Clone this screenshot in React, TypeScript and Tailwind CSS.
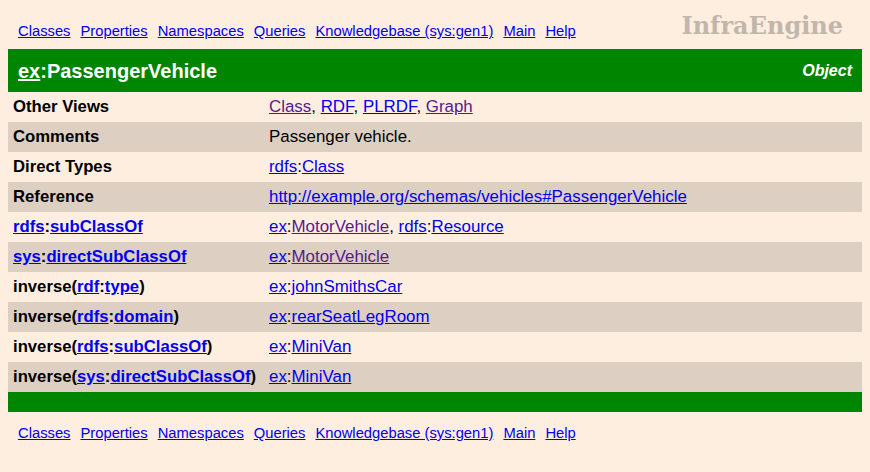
import React from 'react';

const blue = 'text-[#0000ee] underline';
const purple = 'text-[#551a8b] underline';

const NavLinks = () => (
  <div className="flex gap-[10px] text-[14.75px] leading-none">
    {['Classes', 'Properties', 'Namespaces', 'Queries', 'Knowledgebase (sys:gen1)', 'Main', 'Help'].map((t) => (
      <a key={t} href="#" className={blue}>
        {t}
      </a>
    ))}
  </div>
);

const L = ({ c = blue, children }: { c?: string; children: React.ReactNode }) => (
  <a href="#" className={c}>
    {children}
  </a>
);

const rows: { label: React.ReactNode; value: React.ReactNode }[] = [
  {
    label: 'Other Views',
    value: (
      <>
        <L c={purple}>Class</L>, <L>RDF</L>, <L>PLRDF</L>, <L c={purple}>Graph</L>
      </>
    ),
  },
  { label: 'Comments', value: 'Passenger vehicle.' },
  {
    label: 'Direct Types',
    value: (
      <>
        <L>rdfs</L>:<L>Class</L>
      </>
    ),
  },
  { label: 'Reference', value: <L>http://example.org/schemas/vehicles#PassengerVehicle</L> },
  {
    label: (
      <>
        <L>rdfs</L>:<L>subClassOf</L>
      </>
    ),
    value: (
      <>
        <L>ex</L>:<L c={purple}>MotorVehicle</L>, <L>rdfs</L>:<L>Resource</L>
      </>
    ),
  },
  {
    label: (
      <>
        <L>sys</L>:<L>directSubClassOf</L>
      </>
    ),
    value: (
      <>
        <L>ex</L>:<L c={purple}>MotorVehicle</L>
      </>
    ),
  },
  {
    label: (
      <>
        inverse(<L>rdf</L>:<L>type</L>)
      </>
    ),
    value: (
      <>
        <L>ex</L>:<L>johnSmithsCar</L>
      </>
    ),
  },
  {
    label: (
      <>
        inverse(<L>rdfs</L>:<L>domain</L>)
      </>
    ),
    value: (
      <>
        <L>ex</L>:<L>rearSeatLegRoom</L>
      </>
    ),
  },
  {
    label: (
      <>
        inverse(<L>rdfs</L>:<L>subClassOf</L>)
      </>
    ),
    value: (
      <>
        <L>ex</L>:<L>MiniVan</L>
      </>
    ),
  },
  {
    label: (
      <>
        inverse(<L>sys</L>:<L>directSubClassOf</L>)
      </>
    ),
    value: (
      <>
        <L>ex</L>:<L>MiniVan</L>
      </>
    ),
  },
];

export default function App() {
  return (
    <div
      className="min-h-[472px] w-[870px] bg-[#fdeee0] px-[8px] text-black"
      style={{ fontFamily: '"Liberation Sans", Arial, sans-serif' }}
    >
      <div className="flex h-[49px] items-end justify-between pb-[10px] pl-[10px] pr-[19px]">
        <NavLinks />
        <div
          className="mb-[1px] text-[24px] font-bold leading-none text-[#c2b6ab]"
          style={{ fontFamily: '"DejaVu Serif", "Liberation Serif", serif' }}
        >
          InfraEngine
        </div>
      </div>

      <div className="flex h-[43px] items-center justify-between bg-[#008500] pl-[10px] pr-[10px] text-white">
        <div className="text-[20px] font-bold">
          <a href="#" className="underline">
            ex
          </a>
          :PassengerVehicle
        </div>
        <div className="text-[16px] font-bold italic">Object</div>
      </div>

      <table className="w-full border-collapse">
        <tbody>
          {rows.map((r, i) => (
            <tr key={i} className={`h-[30px] ${i % 2 === 1 ? 'bg-[#ddcfc2]' : ''}`}>
              <td className="w-[256px] whitespace-nowrap px-[5px] py-0 text-[16.7px] font-bold">{r.label}</td>
              <td className="px-[5px] py-0 text-[16.9px]">{r.value}</td>
            </tr>
          ))}
        </tbody>
      </table>

      <div className="h-[20px] bg-[#008500]" />

      <div className="pl-[10px] pt-[14px]">
        <NavLinks />
      </div>
    </div>
  );
}
